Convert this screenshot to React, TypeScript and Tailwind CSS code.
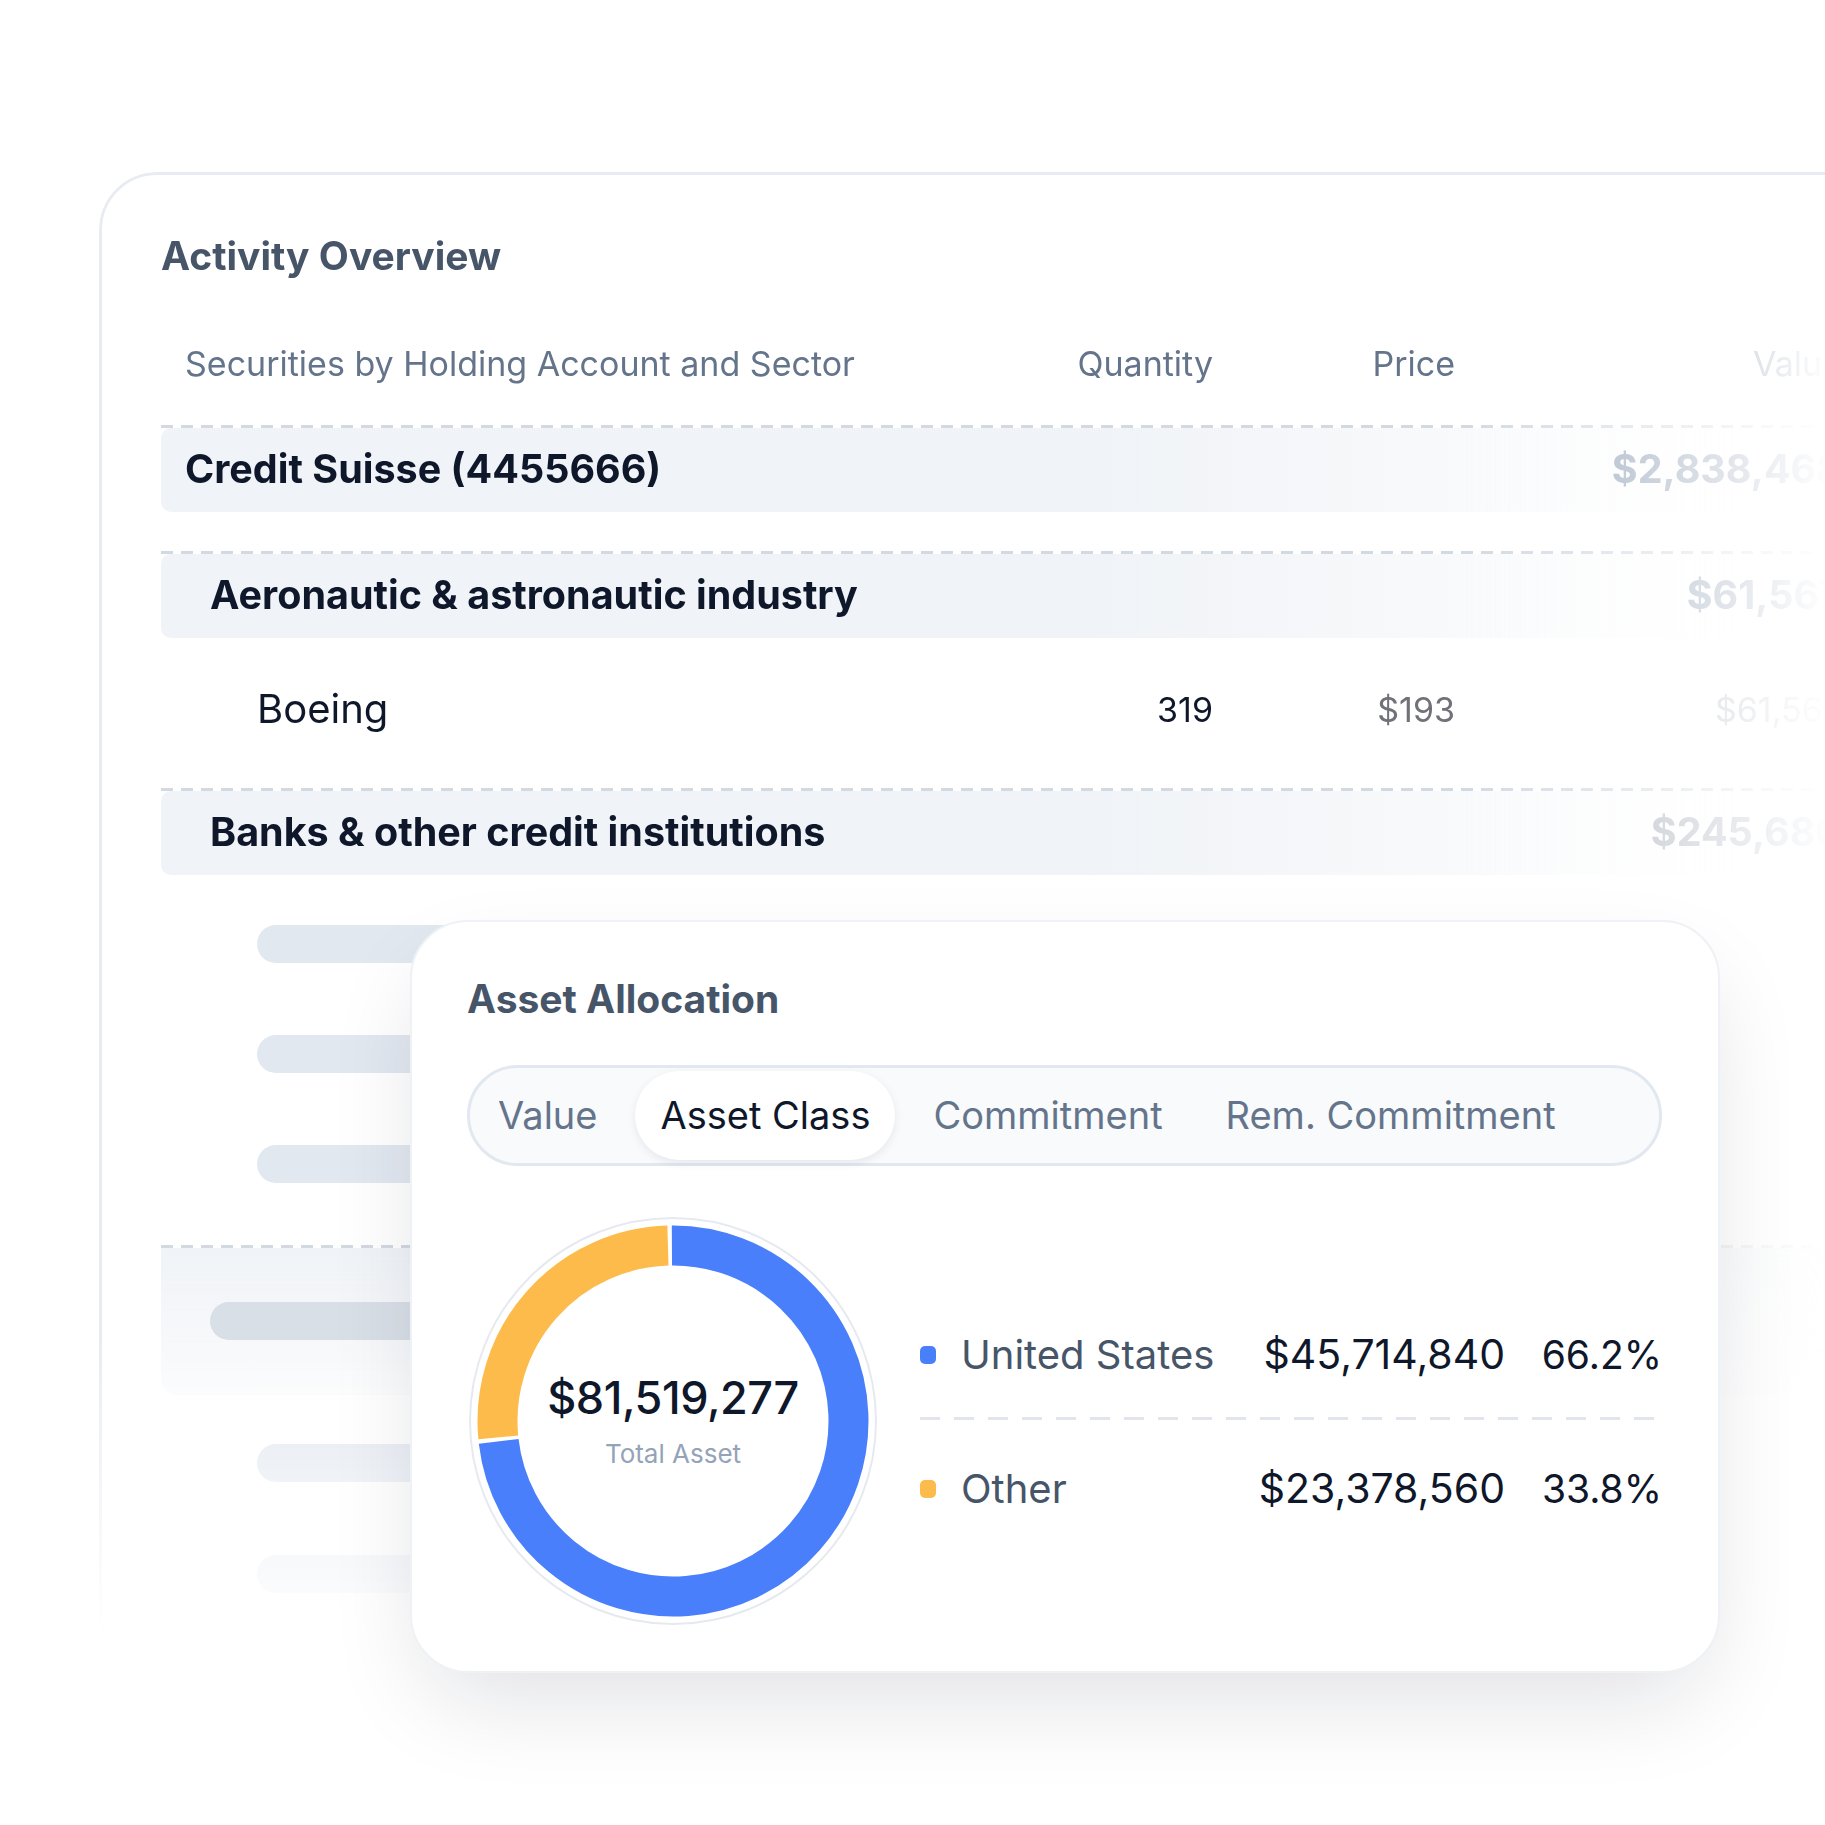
import React from 'react';

const dash = 'h-[3px] w-full bg-[repeating-linear-gradient(to_right,#d3d9e1_0_12px,transparent_12px_20px)]';
const rowBg = 'bg-[linear-gradient(to_right,#f0f3f7_55%,rgba(240,243,247,0)_95%)]';
const cols = 'grid grid-cols-[852px_200px_242px_387px] items-center';

const arcPath = (cx: number, cy: number, r: number, a0: number, a1: number) => {
    const pt = (a: number) => {
        const rad = (a * Math.PI) / 180;
        return [cx + r * Math.sin(rad), cy - r * Math.cos(rad)];
    };
    const [x0, y0] = pt(a0);
    const [x1, y1] = pt(a1);
    const large = a1 - a0 > 180 ? 1 : 0;
    return `M ${x0} ${y0} A ${r} ${r} 0 ${large} 1 ${x1} ${y1}`;
};

const Donut: React.FC = () => (
    <svg width="420" height="420" viewBox="0 0 420 420" className="-ml-[4px] shrink-0">
        <circle cx="210" cy="210" r="203" fill="none" stroke="#e6eaf0" strokeWidth="2" />
        <path d={arcPath(210, 210, 175.5, -0.35, 263.35)} fill="none" stroke="#4a7ffb" strokeWidth="40" />
        <path d={arcPath(210, 210, 175.5, 264.65, 358.35)} fill="none" stroke="#fdbb4b" strokeWidth="40" />
        <foreignObject x="0" y="0" width="420" height="420">
            <div className="w-full h-full flex flex-col items-center justify-center">
                <div className="text-[45px] leading-[52px] font-medium text-[#0f172a] tracking-[-0.01em]">$81,519,277</div>
                <div className="text-[26px] leading-[32px] text-[#94a3b8] mt-[14px]">Total Asset</div>
            </div>
        </foreignObject>
    </svg>
);

const Skeleton: React.FC<{ tone?: string }> = ({ tone = 'bg-[#e2e8f0]' }) => (
    <div className={`h-[38px] w-[500px] rounded-full ${tone}`} />
);

const legend = [
    { label: 'United States', value: '$45,714,840', pct: '66.2%', dot: 'bg-[#4a7ffb]' },
    { label: 'Other', value: '$23,378,560', pct: '33.8%', dot: 'bg-[#fdbb4b]' },
];

const tabs = ['Value', 'Asset Class', 'Commitment', 'Rem. Commitment'];

export default function App() {
    return (
        <div className="relative w-[1825px] h-[1825px] overflow-hidden bg-white font-['Inter','Liberation_Sans',sans-serif]">
            {/* Activity Overview card */}
            <div className="ml-[99px] mt-[172px] w-[1800px] h-[1500px] rounded-[58px] border-[3px] border-[#e8ecf2] bg-white pl-[59px] pt-[58px] [mask-image:linear-gradient(to_bottom,#000_1168px,transparent_1468px)]">
                <h2 className="text-[39px] leading-[46px] font-bold text-[#475569]">Activity Overview</h2>

                <div className="w-[1681px] mt-[42px] [mask-image:linear-gradient(to_right,#000_1300px,transparent_1670px)]">
                    <div className={`${cols} h-[84px] text-[34px] text-[#64748b]`}>
                        <div className="pl-[24px] whitespace-nowrap">Securities by Holding Account and Sector</div>
                        <div className="text-right">Quantity</div>
                        <div className="text-right">Price</div>
                        <div className="text-right">Value</div>
                    </div>

                    <div className={`${dash} mt-[20px]`} />
                    <div className={`${cols} h-[84px] rounded-[10px] ${rowBg} text-[39.5px] font-bold text-[#0f172a]`}>
                        <div className="pl-[24px]">Credit Suisse (4455666)</div>
                        <div />
                        <div />
                        <div className="text-right text-[#94a3b8]">$2,838,468</div>
                    </div>

                    <div className={`${dash} mt-[39px]`} />
                    <div className={`${cols} h-[84px] rounded-[10px] ${rowBg} text-[39.5px] font-bold text-[#0f172a]`}>
                        <div className="pl-[49px] whitespace-nowrap">Aeronautic &amp; astronautic industry</div>
                        <div />
                        <div />
                        <div className="text-right text-[#94a3b8]">$61,567</div>
                    </div>

                    <div className={`${cols} h-[142px]`}>
                        <div className="pl-[96px] text-[40px] text-[#0f172a]">Boeing</div>
                        <div className="text-right text-[34px] text-[#0f172a]">319</div>
                        <div className="text-right text-[34px] text-[#71717a]">$193</div>
                        <div className="text-right text-[34px] text-[#b4bac3]">$61,567</div>
                    </div>

                    <div className={`${dash} mt-[8px]`} />
                    <div className={`${cols} h-[84px] rounded-[10px] ${rowBg} text-[39.5px] font-bold text-[#0f172a]`}>
                        <div className="pl-[49px] whitespace-nowrap">Banks &amp; other credit institutions</div>
                        <div />
                        <div />
                        <div className="text-right text-[#a7afba]">$245,680</div>
                    </div>

                    <div className="pl-[96px] pt-[50px] flex flex-col gap-[72px]">
                        <Skeleton />
                        <Skeleton />
                        <Skeleton />
                    </div>

                    <div className={`${dash} mt-[62px]`} />
                    <div className="h-[147px] pt-[54px] pl-[49px] rounded-b-[16px] bg-[linear-gradient(to_bottom,#f0f3f7,rgba(240,243,247,0.3))]">
                        <Skeleton tone="bg-[#d9dfe7]" />
                    </div>

                    <div className="pl-[96px] pt-[49px] flex flex-col gap-[73px]">
                        <Skeleton />
                        <Skeleton />
                    </div>
                </div>
            </div>

            {/* Asset Allocation card, floating over the table */}
            <div className="absolute left-[410px] top-[920px] w-[1310px] h-[753px] rounded-[58px] border-2 border-[#eef1f5] bg-white pl-[55px] pr-[56px] pt-[54px] shadow-[0_40px_100px_-20px_rgba(15,23,42,0.14)]">
                <h2 className="text-[39px] leading-[46px] font-bold text-[#475569]">Asset Allocation</h2>

                <div className="mt-[43px] h-[101px] w-[1195px] rounded-full border-[3px] border-[#e2e8f0] bg-[#f8fafc] p-[3px] flex gap-[13px]">
                    {tabs.map((t) => (
                        <div
                            key={t}
                            className={
                                t === 'Asset Class'
                                    ? 'h-full px-[25px] flex items-center rounded-full bg-white text-[38px] text-[#0f172a] shadow-[0_3px_10px_rgba(15,23,42,0.08)]'
                                    : 'h-full px-[25px] flex items-center text-[38px] text-[#64748b]'
                            }
                        >
                            {t}
                        </div>
                    ))}
                </div>

                <div className="mt-[45px] flex items-center">
                    <Donut />
                    <div className="ml-[37px] w-[749px]">
                        {legend.map((l, i) => (
                            <React.Fragment key={l.label}>
                                {i > 0 && <div className="mt-[33px] mb-[38px] h-[3px] w-[735px] bg-[repeating-linear-gradient(to_right,#e2e6ec_0_20px,transparent_20px_34px)]" />}
                                <div className="grid grid-cols-[1fr_auto_157px] items-center h-[60px]">
                                    <div className="flex items-center gap-[25px]">
                                        <span className={`w-[16px] h-[18px] rounded-[5px] ${l.dot}`} />
                                        <span className="text-[40px] text-[#475569]">{l.label}</span>
                                    </div>
                                    <div className="text-right text-[41px] text-[#0f172a]">{l.value}</div>
                                    <div className="text-right text-[39px] text-[#0f172a]">{l.pct}</div>
                                </div>
                            </React.Fragment>
                        ))}
                    </div>
                </div>
            </div>
        </div>
    );
}
